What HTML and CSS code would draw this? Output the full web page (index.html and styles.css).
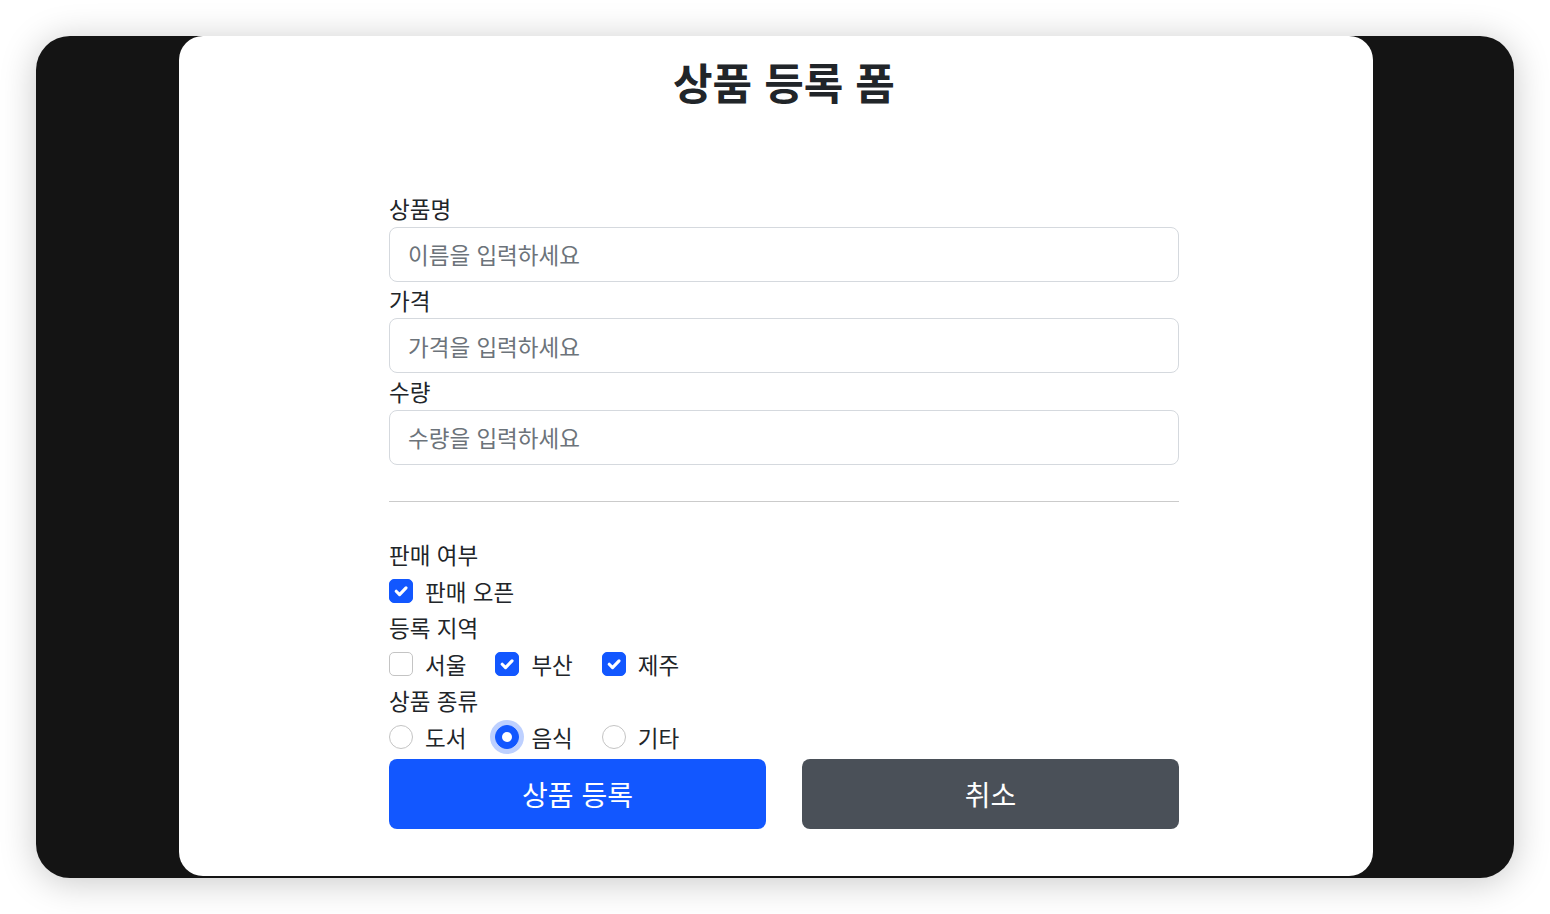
FILE: index.html
```html
<!DOCTYPE html>
<html lang="ko">
<head>
<meta charset="utf-8">
<title>상품 등록 폼</title>
<link rel="stylesheet" href="styles.css">
</head>
<body>
<div class="frame">
  <div class="card">
    <div class="content">
      <h2 class="title">상품 등록 폼</h2>
      <form class="form">
        <label class="field-label" for="name">상품명</label>
        <input class="control" id="name" type="text" placeholder="이름을 입력하세요">
        <label class="field-label" for="price">가격</label>
        <input class="control" id="price" type="text" placeholder="가격을 입력하세요">
        <label class="field-label" for="qty">수량</label>
        <input class="control" id="qty" type="text" placeholder="수량을 입력하세요">

        <hr class="divider">

        <div class="row-label">판매 여부</div>
        <div class="check-row">
          <label class="check">
            <span class="box checked"><svg viewBox="0 0 20 20" width="24" height="24"><path d="M6 10.2l2.8 2.8l5.4-5.6" fill="none" stroke="#fff" stroke-width="2.6" stroke-linecap="round" stroke-linejoin="round"/></svg></span>
            <span class="check-text">판매 오픈</span>
          </label>
        </div>

        <div class="row-label">등록 지역</div>
        <div class="check-row">
          <label class="check">
            <span class="box"></span>
            <span class="check-text">서울</span>
          </label>
          <label class="check">
            <span class="box checked"><svg viewBox="0 0 20 20" width="24" height="24"><path d="M6 10.2l2.8 2.8l5.4-5.6" fill="none" stroke="#fff" stroke-width="2.6" stroke-linecap="round" stroke-linejoin="round"/></svg></span>
            <span class="check-text">부산</span>
          </label>
          <label class="check">
            <span class="box checked"><svg viewBox="0 0 20 20" width="24" height="24"><path d="M6 10.2l2.8 2.8l5.4-5.6" fill="none" stroke="#fff" stroke-width="2.6" stroke-linecap="round" stroke-linejoin="round"/></svg></span>
            <span class="check-text">제주</span>
          </label>
        </div>

        <div class="row-label">상품 종류</div>
        <div class="check-row">
          <label class="check">
            <span class="radio"></span>
            <span class="check-text">도서</span>
          </label>
          <label class="check">
            <span class="radio selected"><span class="dot"></span></span>
            <span class="check-text">음식</span>
          </label>
          <label class="check">
            <span class="radio"></span>
            <span class="check-text">기타</span>
          </label>
        </div>

        <div class="buttons">
          <button type="button" class="btn btn-primary">상품 등록</button>
          <button type="button" class="btn btn-secondary">취소</button>
        </div>
      </form>
    </div>
  </div>
</div>
</body>
</html>
```

FILE: styles.css
```css
* {
  box-sizing: border-box;
}

html, body {
  margin: 0;
  padding: 0;
  background: #ffffff;
}

body {
  font-family: "Noto Sans CJK KR", "Noto Sans", sans-serif;
  color: #212529;
  width: 1550px;
  height: 914px;
  overflow: hidden;
}

.frame {
  margin: 36px 0 0 36px;
  width: 1478px;
  height: 842px;
  padding-left: 2px;
  background: #141414;
  border-radius: 34px;
  box-shadow: 0 4px 36px rgba(0, 0, 0, 0.22);
  display: flex;
  justify-content: center;
}

.card {
  width: 1194px;
  height: 840px;
  background: #ffffff;
  border-radius: 24px;
}

.content {
  padding: 21px 194px 0 210px;
}

.title {
  margin: 0;
  text-align: center;
  font-size: 43px;
  font-weight: 700;
  line-height: 48px;
  color: #212529;
}

.form {
  margin-top: 85px;
  display: flex;
  flex-direction: column;
}

.field-label {
  display: block;
  font-size: 22.5px;
  line-height: 36.5px;
  height: 36.5px;
}

.control {
  display: block;
  width: 100%;
  height: 55px;
  padding: 0 18px;
  border: 1.3px solid #d5d9de;
  border-radius: 8px;
  font-family: inherit;
  font-size: 22.5px;
  color: #212529;
  background: #fff;
  outline: none;
}

.control::placeholder {
  color: #6c737a;
}

.divider {
  width: 100%;
  margin: 36px 0 34.5px;
  border: 0;
  border-top: 1.6px solid #cbcbcb;
}

.row-label {
  font-size: 22.5px;
  line-height: 36.6px;
  height: 36.6px;
}

.check-row {
  display: flex;
  align-items: center;
  gap: 29px;
  height: 36.6px;
}

.check {
  display: flex;
  align-items: center;
  gap: 12px;
  font-size: 22.5px;
  line-height: 36.6px;
}

.check-text {
  display: block;
}

.box {
  width: 24px;
  height: 24px;
  border: 1.3px solid #c4c4c4;
  border-radius: 5px;
  background: #fff;
  display: flex;
  align-items: center;
  justify-content: center;
}

.box.checked {
  background: #1257ff;
  border-color: #1257ff;
}

.box svg {
  display: block;
  flex: none;
}

.radio {
  width: 24px;
  height: 24px;
  border: 1.3px solid #c4c4c4;
  border-radius: 50%;
  background: #fff;
  display: flex;
  align-items: center;
  justify-content: center;
}

.radio.selected {
  background: #1257ff;
  border-color: #1257ff;
  box-shadow: 0 0 0 5px rgba(18, 87, 255, 0.28);
}

.dot {
  width: 10px;
  height: 10px;
  border-radius: 50%;
  background: #fff;
}

.buttons {
  margin-top: 3.6px;
  display: grid;
  grid-template-columns: 1fr 1fr;
  gap: 36px;
}

.btn {
  height: 70px;
  border: 0;
  border-radius: 8px;
  font-family: inherit;
  font-size: 28px;
  color: #ffffff;
  cursor: pointer;
}

.btn-primary {
  background: #1257ff;
}

.btn-secondary {
  background: #4a5058;
}
```
